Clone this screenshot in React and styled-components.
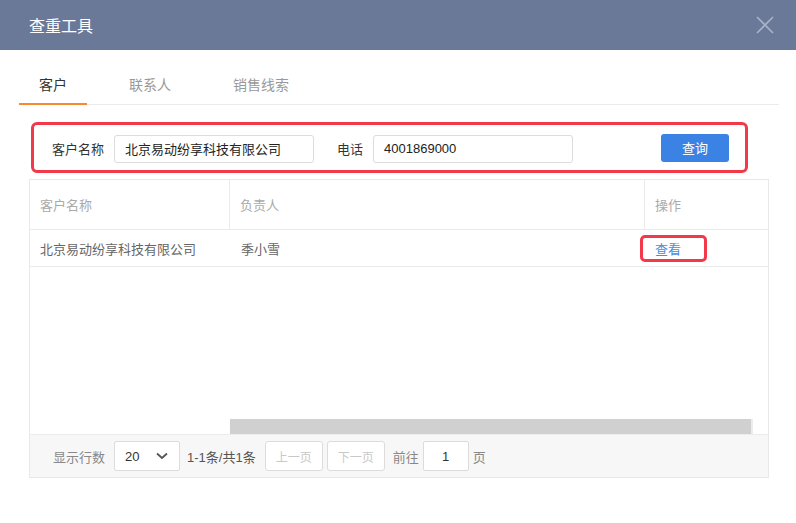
import React from "react";
import styled, { createGlobalStyle } from "styled-components";

const Global = createGlobalStyle`
  html, body { margin: 0; padding: 0; background: #fff; }
  body { font-family: "Liberation Sans", "Noto Sans CJK SC", sans-serif; }
  * { box-sizing: border-box; }
`;

const FONT = `"Liberation Sans", "Noto Sans CJK SC", sans-serif`;

const Modal = styled.div`
  width: 796px;
  height: 523px;
  background: #fff;
  font-family: ${FONT};
`;

const Header = styled.div`
  height: 50px;
  background: #6b7999;
  display: flex;
  align-items: center;
  justify-content: space-between;
  padding: 0 22px 0 29px;
`;

const Title = styled.div`
  color: #fff;
  font-size: 16px;
`;

const Close = styled.button`
  border: 0;
  background: none;
  padding: 0;
  width: 18px;
  height: 18px;
  display: flex;
  cursor: pointer;
`;

const Body = styled.div`
  padding: 16px 17px 0 19px;
`;

const TabBar = styled.div`
  display: flex;
  gap: 22px;
  border-bottom: 1px solid #ebebeb;
`;

const Tab = styled.div`
  height: 39px;
  padding: 0 20px 1px;
  display: flex;
  align-items: center;
  font-size: 14px;
  color: ${(p) => (p.$active ? "#333" : "#999")};
  border-bottom: 2px solid ${(p) => (p.$active ? "#f68a2e" : "transparent")};
  margin-bottom: -1px;
`;

const SearchBar = styled.div`
  margin: 17px 0 0 12px;
  width: 717px;
  height: 51px;
  border: 3px solid #f2394a;
  border-radius: 6px;
  display: flex;
  align-items: center;
  padding: 2px 16px 0 18px;
`;

const Label = styled.span`
  font-size: 13px;
  color: #333;
  margin-right: 10px;
  margin-left: ${(p) => p.$gap || 0}px;
`;

const Input = styled.div`
  width: 200px;
  height: 28px;
  border: 1px solid #dcdcdc;
  border-radius: 3px;
  display: flex;
  align-items: center;
  padding: 0 10px;
  font-size: 13px;
  color: #222;
`;

const Button = styled.button`
  margin-left: auto;
  width: 68px;
  height: 28px;
  border: 0;
  border-radius: 3px;
  background: #3a82e4;
  color: #fff;
  font-size: 13px;
  font-family: ${FONT};
  margin-top: -2px;
`;

const Table = styled.div`
  margin: 6px 10px 0 10px;
  border: 1px solid #e8e8e8;
  height: 299px;
  display: flex;
  flex-direction: column;
`;

const Row = styled.div`
  display: grid;
  grid-template-columns: 200px 415px 1fr;
  height: ${(p) => p.$h}px;
  border-bottom: 1px solid #ebebeb;
  flex: none;
`;

const HeadCell = styled.div`
  display: flex;
  align-items: center;
  padding-left: 10px;
  font-size: 13px;
  color: #aaa;
  border-right: ${(p) => (p.$last ? "0" : "1px solid #ebebeb")};
`;

const Cell = styled.div`
  display: flex;
  align-items: center;
  padding-left: ${(p) => p.$pl}px;
  font-size: 13px;
  color: #666;
`;

const LinkBox = styled.span`
  width: 67px;
  height: 27px;
  margin-left: -5px;
  padding-left: 12px;
  display: flex;
  align-items: center;
  border: 3px solid #f2394a;
  border-radius: 5px;
  color: #4a8ce2;
  font-size: 13px;
  text-decoration: none;
  cursor: pointer;
`;

const Empty = styled.div`
  flex: 1;
  display: flex;
  flex-direction: column;
  justify-content: flex-end;
`;

const ScrollTrack = styled.div`
  margin-left: 200px;
  width: 523px;
  height: 15px;
  background: #d0d0d0;
  border-right: 2px solid #ececec;
`;

const Footer = styled.div`
  height: 43px;
  background: #f7f7f7;
  border-top: 1px solid #ececec;
  display: flex;
  align-items: center;
  padding-left: 23px;
  font-size: 13px;
`;

const Muted = styled.span`
  color: #888;
  margin-right: ${(p) => p.$mr || 0}px;
`;

const Select = styled.div`
  width: 66px;
  height: 30px;
  background: #fff;
  border: 1px solid #dcdcdc;
  border-radius: 2px;
  display: flex;
  align-items: center;
  justify-content: space-between;
  padding: 0 11px 0 10px;
  color: #333;
  margin-right: 7px;
`;

const Count = styled.span`
  color: #555;
  margin-right: 9px;
`;

const PageBtn = styled.div`
  width: 58px;
  height: 30px;
  border: 1px solid #dcdcdc;
  border-radius: 3px;
  background: #fff;
  display: flex;
  align-items: center;
  justify-content: center;
  color: #c8c8c8;
  font-size: 12px;
  margin-right: ${(p) => p.$mr || 0}px;
`;

const PageInput = styled.div`
  width: 46px;
  height: 30px;
  border: 1px solid #dcdcdc;
  border-radius: 2px;
  background: #fff;
  display: flex;
  align-items: center;
  justify-content: center;
  color: #333;
  margin-right: 4px;
`;

export default function App() {
  return (
    <>
      <Global />
      <Modal>
        <Header>
          <Title>查重工具</Title>
          <Close aria-label="close">
            <svg width="18" height="18" viewBox="0 0 18 18">
              <path d="M1 1 L17 17 M17 1 L1 17" stroke="#a9b2c8" strokeWidth="1.6" fill="none" />
            </svg>
          </Close>
        </Header>
        <Body>
          <TabBar>
            <Tab $active>客户</Tab>
            <Tab>联系人</Tab>
            <Tab>销售线索</Tab>
          </TabBar>
          <SearchBar>
            <Label>客户名称</Label>
            <Input>北京易动纷享科技有限公司</Input>
            <Label $gap={23}>电话</Label>
            <Input>4001869000</Input>
            <Button>查询</Button>
          </SearchBar>
          <Table>
            <Row $h={50}>
              <HeadCell>客户名称</HeadCell>
              <HeadCell>负责人</HeadCell>
              <HeadCell $last>操作</HeadCell>
            </Row>
            <Row $h={37}>
              <Cell $pl={10}>北京易动纷享科技有限公司</Cell>
              <Cell $pl={11}>季小雪</Cell>
              <Cell $pl={0}>
                <LinkBox>查看</LinkBox>
              </Cell>
            </Row>
            <Empty>
              <ScrollTrack />
            </Empty>
            <Footer>
              <Muted $mr={9}>显示行数</Muted>
              <Select>
                <span>20</span>
                <svg width="12" height="8" viewBox="0 0 12 8">
                  <path d="M1 1.5 L6 6 L11 1.5" stroke="#555" strokeWidth="1.8" fill="none" />
                </svg>
              </Select>
              <Count>1-1条/共1条</Count>
              <PageBtn $mr={4}>上一页</PageBtn>
              <PageBtn $mr={8}>下一页</PageBtn>
              <Muted $mr={4}>前往</Muted>
              <PageInput>1</PageInput>
              <Muted>页</Muted>
            </Footer>
          </Table>
        </Body>
      </Modal>
    </>
  );
}
